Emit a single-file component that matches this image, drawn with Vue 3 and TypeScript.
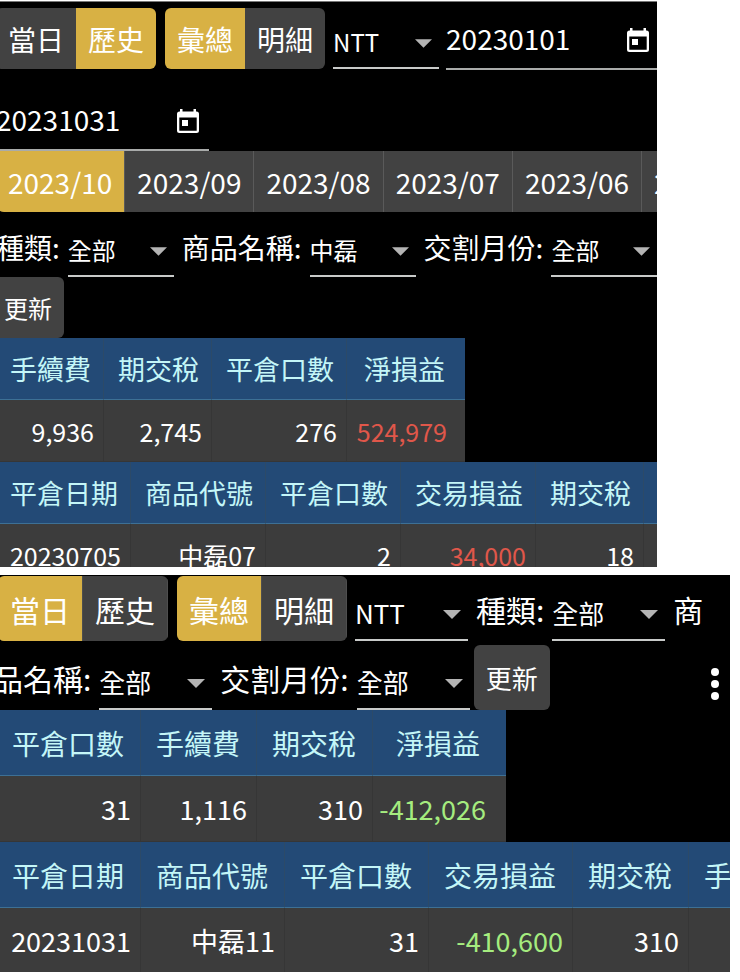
<script setup lang="ts">
import { ref } from 'vue'

interface Column {
  key: string
  label: string
}
interface Cell {
  text: string
  tone?: 'gain' | 'loss'
}

const months = ['2023/10', '2023/09', '2023/08', '2023/07', '2023/06', '2023/05']
const activeMonth = ref('2023/10')
const fromDate = ref('20230101')
const toDate = ref('20231031')
const historyRange = ref('歷史')
const historyMode = ref('彙總')
const todayRange = ref('當日')
const todayMode = ref('彙總')

const historySummary: Column[] = [
  { key: 'fee', label: '手續費' },
  { key: 'tax', label: '期交稅' },
  { key: 'lots', label: '平倉口數' },
  { key: 'net', label: '淨損益' },
]
const historySummaryRow: Cell[] = [
  { text: '9,936' },
  { text: '2,745' },
  { text: '276' },
  { text: '524,979', tone: 'gain' },
]
const detail: Column[] = [
  { key: 'date', label: '平倉日期' },
  { key: 'code', label: '商品代號' },
  { key: 'lots', label: '平倉口數' },
  { key: 'pl', label: '交易損益' },
  { key: 'tax', label: '期交稅' },
  { key: 'fee', label: '手續費' },
]
const historyRow: Cell[] = [
  { text: '20230705' },
  { text: '中磊07' },
  { text: '2' },
  { text: '34,000', tone: 'gain' },
  { text: '18' },
  { text: '' },
]
const todaySummary: Column[] = [
  { key: 'lots', label: '平倉口數' },
  { key: 'fee', label: '手續費' },
  { key: 'tax', label: '期交稅' },
  { key: 'net', label: '淨損益' },
]
const todaySummaryRow: Cell[] = [
  { text: '31' },
  { text: '1,116' },
  { text: '310' },
  { text: '-412,026', tone: 'loss' },
]
const todayRow: Cell[] = [
  { text: '20231031' },
  { text: '中磊11' },
  { text: '31' },
  { text: '-410,600', tone: 'loss' },
  { text: '310' },
  { text: '' },
]
</script>

<template>
  <main class="page">
    <section class="panel history" aria-label="歷史平倉">
      <div class="bar lead">
        <div class="group">
          <button
            v-for="name in ['當日', '歷史']"
            :key="name"
            type="button"
            :class="{ on: historyRange === name }"
            @click="historyRange = name"
          >{{ name }}</button>
        </div>
        <div class="group">
          <button
            v-for="name in ['彙總', '明細']"
            :key="name"
            type="button"
            :class="{ on: historyMode === name }"
            @click="historyMode = name"
          >{{ name }}</button>
        </div>
        <span class="pick">
          <select aria-label="幣別"><option>NTT</option></select>
          <svg viewBox="0 0 18 9" aria-hidden="true"><path d="M0 0h18L9 9z" /></svg>
        </span>
        <span class="date">
          <input v-model="fromDate" type="text" aria-label="起始日期" />
          <button type="button" aria-label="選擇起始日期">
            <svg viewBox="0 0 22 24" aria-hidden="true">
              <path fill-rule="evenodd" d="M3 0h2.500v2.500h11V0h2.500v2.500h.5A2.500 2.500 0 0 1 22 5v16.500a2.500 2.500 0 0 1-2.500 2.500h-17A2.500 2.500 0 0 1 0 21.500V5a2.500 2.500 0 0 1 2.500-2.500h.5zM2.300 8.500v13.200h17.400v-13.200z" />
              <path d="M5 11h6v6H5z" />
            </svg>
          </button>
        </span>
      </div>
      <div class="bar second">
        <span class="date">
          <input v-model="toDate" type="text" aria-label="結束日期" />
          <button type="button" aria-label="選擇結束日期">
            <svg viewBox="0 0 22 24" aria-hidden="true">
              <path fill-rule="evenodd" d="M3 0h2.500v2.500h11V0h2.500v2.500h.5A2.500 2.500 0 0 1 22 5v16.500a2.500 2.500 0 0 1-2.500 2.500h-17A2.500 2.500 0 0 1 0 21.500V5a2.500 2.500 0 0 1 2.500-2.500h.5zM2.300 8.500v13.200h17.400v-13.200z" />
              <path d="M5 11h6v6H5z" />
            </svg>
          </button>
        </span>
      </div>
      <div class="months">
        <button
          v-for="m in months"
          :key="m"
          type="button"
          :class="{ on: activeMonth === m }"
          @click="activeMonth = m"
        >{{ m }}</button>
      </div>
      <div class="bar filters">
        <label for="h-kind">種類:</label>
        <span class="pick">
          <select id="h-kind"><option>全部</option></select>
          <svg viewBox="0 0 18 9" aria-hidden="true"><path d="M0 0h18L9 9z" /></svg>
        </span>
        <label for="h-name">商品名稱:</label>
        <span class="pick">
          <select id="h-name"><option>中磊</option></select>
          <svg viewBox="0 0 18 9" aria-hidden="true"><path d="M0 0h18L9 9z" /></svg>
        </span>
        <label for="h-month">交割月份:</label>
        <span class="pick">
          <select id="h-month"><option>全部</option></select>
          <svg viewBox="0 0 18 9" aria-hidden="true"><path d="M0 0h18L9 9z" /></svg>
        </span>
      </div>
      <div class="bar">
        <button type="button" class="update">更新</button>
      </div>
      <table class="summary">
        <thead>
          <tr><th v-for="c in historySummary" :key="c.key" scope="col">{{ c.label }}</th></tr>
        </thead>
        <tbody>
          <tr><td v-for="(c, i) in historySummaryRow" :key="i" :class="c.tone">{{ c.text }}</td></tr>
        </tbody>
      </table>
      <div class="detail">
        <table>
          <thead>
            <tr><th v-for="c in detail" :key="c.key" scope="col">{{ c.label }}</th></tr>
          </thead>
          <tbody>
            <tr><td v-for="(c, i) in historyRow" :key="i" :class="c.tone">{{ c.text }}</td></tr>
          </tbody>
        </table>
      </div>
    </section>

    <section class="panel today" aria-label="當日平倉">
      <div class="bar">
        <div class="group">
          <button
            v-for="name in ['當日', '歷史']"
            :key="name"
            type="button"
            :class="{ on: todayRange === name }"
            @click="todayRange = name"
          >{{ name }}</button>
        </div>
        <div class="group">
          <button
            v-for="name in ['彙總', '明細']"
            :key="name"
            type="button"
            :class="{ on: todayMode === name }"
            @click="todayMode = name"
          >{{ name }}</button>
        </div>
        <span class="pick">
          <select aria-label="幣別"><option>NTT</option></select>
          <svg viewBox="0 0 18 9" aria-hidden="true"><path d="M0 0h18L9 9z" /></svg>
        </span>
        <label for="t-kind">種類:</label>
        <span class="pick">
          <select id="t-kind"><option>全部</option></select>
          <svg viewBox="0 0 18 9" aria-hidden="true"><path d="M0 0h18L9 9z" /></svg>
        </span>
        <label for="t-name">商</label>
      </div>
      <div class="bar second">
        <label for="t-name">品名稱:</label>
        <span class="pick">
          <select id="t-name"><option>全部</option></select>
          <svg viewBox="0 0 18 9" aria-hidden="true"><path d="M0 0h18L9 9z" /></svg>
        </span>
        <label for="t-month">交割月份:</label>
        <span class="pick">
          <select id="t-month"><option>全部</option></select>
          <svg viewBox="0 0 18 9" aria-hidden="true"><path d="M0 0h18L9 9z" /></svg>
        </span>
        <button type="button" class="update">更新</button>
        <button type="button" class="more" aria-label="更多">
          <svg viewBox="0 0 8 32" aria-hidden="true">
            <circle cx="4" cy="4" r="4" /><circle cx="4" cy="16" r="4" /><circle cx="4" cy="28" r="4" />
          </svg>
        </button>
      </div>
      <table class="summary">
        <thead>
          <tr><th v-for="c in todaySummary" :key="c.key" scope="col">{{ c.label }}</th></tr>
        </thead>
        <tbody>
          <tr><td v-for="(c, i) in todaySummaryRow" :key="i" :class="c.tone">{{ c.text }}</td></tr>
        </tbody>
      </table>
      <div class="detail">
        <table>
          <thead>
            <tr><th v-for="c in detail" :key="c.key" scope="col">{{ c.label }}</th></tr>
          </thead>
          <tbody>
            <tr><td v-for="(c, i) in todayRow" :key="i" :class="c.tone">{{ c.text }}</td></tr>
          </tbody>
        </table>
      </div>
    </section>
  </main>
</template>

<style>
body {
  background: #fff;
}
</style>

<style scoped>
.page {
  display: flex;
  flex-direction: column;
  gap: 8px;
  padding-top: 1px;
  font-family: 'Noto Sans CJK TC', 'Noto Sans', sans-serif;
  color: #fff;
}
.panel {
  background: #000;
  overflow: hidden;
}
.history {
  --text: 28px;
  --small: 24px;
  --head: 27px;
  --cell: 25px;
  --pad: 12px;
  --btn: 61px;
  --field: 106px;
  --field-h: 54px;
  --label-h: 60px;
  --row: 62px;
  --shift: -4px;
  --table-shift: -4px;
  --th-left: 14px;
  --th-right: 12px;
  --last-left: 17px;
  --last-right: 20px;
  --td-last: 18px;
  --arrow: 17px;
  margin-right: 83px;
  padding-top: 6px;
  border-top: 1px solid #777;
}
.today {
  --text: 30px;
  --small: 26px;
  --head: 28px;
  --cell: 27px;
  --pad: 12px;
  --btn: 65px;
  --field: 113px;
  --field-h: 56px;
  --label-h: 63px;
  --row: 66px;
  --shift: -2px;
  --table-shift: -3px;
  --th-left: 15px;
  --th-right: 16px;
  --last-left: 23px;
  --last-right: 26px;
  --td-last: 20px;
  --arrow: 18px;
  margin-right: 10px;
  padding-top: 1px;
}
button,
select,
input {
  margin: 0;
  padding: 0;
  border: 0;
  border-radius: 0;
  background: transparent;
  color: inherit;
  font: inherit;
}
button {
  flex: none;
  cursor: pointer;
}
.bar {
  display: flex;
  align-items: flex-end;
  gap: 8px;
  margin-left: var(--shift);
  white-space: nowrap;
}
.group {
  display: flex;
  flex: none;
  margin-right: 1px;
  border-radius: 6px;
  overflow: hidden;
}
.group + .group {
  margin-right: 0;
}
.group button {
  box-sizing: border-box;
  height: var(--btn);
  padding: 0 var(--pad);
  background: #424242;
  font-size: var(--text);
}
.group button.on,
.months button.on {
  background: #d8b144;
}
.today .group button {
  border-right: 1px solid #4e4e4e;
}
.lead .group,
.lead .pick {
  margin-bottom: 1px;
}
.lead .date {
  margin-left: -1px;
}
label {
  flex: none;
  font-size: var(--text);
  line-height: var(--label-h);
}
.pick {
  display: grid;
  flex: none;
  align-items: center;
  width: var(--field);
  height: var(--field-h);
  box-sizing: border-box;
  border-bottom: 2px solid #c8cac9;
}
.pick select,
.pick svg {
  grid-area: 1 / 1;
}
.pick select {
  appearance: none;
  width: 100%;
  height: 100%;
  font-size: var(--small);
}
.pick option {
  color: #000;
}
.pick svg {
  justify-self: end;
  width: var(--arrow);
  height: 9px;
  margin-top: 4px;
  margin-right: 7px;
  fill: #b4b4b4;
  pointer-events: none;
}
.date {
  display: flex;
  flex: none;
  align-items: center;
  box-sizing: border-box;
  width: 213px;
  height: 62px;
  padding-right: 10px;
  border-bottom: 2px solid #a9abaa;
}
.date input {
  flex: 1;
  min-width: 0;
  font-size: var(--text);
}
.date button {
  display: flex;
  padding-top: 3px;
}
.date svg {
  width: 22px;
  height: 24px;
  fill: #fff;
}
.history .second {
  margin-top: 19px;
}
.today .second {
  margin-top: 4px;
  margin-left: -7px;
}
.months {
  display: flex;
  margin-left: var(--shift);
}
.months button {
  box-sizing: border-box;
  height: var(--btn);
  padding: 0 var(--pad);
  border: solid #5a5a5a;
  border-width: 0 1px 0 0;
  background: #424242;
  font-size: var(--text);
}
.months button:first-child {
  border-radius: 0 0 0 8px;
}
.filters {
  height: 65px;
}
.update {
  height: var(--btn);
  margin-left: -4px;
  padding: 0 var(--pad);
  border-radius: 6px;
  background: #424242;
  font-size: var(--small);
}
.more {
  display: flex;
  align-items: center;
  align-self: center;
  margin-left: auto;
  padding: 14px 11px 2px;
}
.more svg {
  width: 8px;
  height: 32px;
  fill: #fff;
}
table {
  margin-left: var(--table-shift);
  border-collapse: separate;
  border-spacing: 0;
  white-space: nowrap;
}
th,
td {
  box-sizing: border-box;
  height: var(--row);
  border: solid #3a4755;
  border-width: 0 1px 1px 0;
}
th {
  padding: 0 var(--th-right) 0 var(--th-left);
  background: #234a76;
  border-right-color: #2c4a68;
  border-bottom-color: #3d7095;
  color: #c4f6f8;
  font-size: var(--head);
  font-weight: 400;
}
td {
  padding: 0 9px 0 4px;
  background: #3c3c3c;
  border-color: #363636;
  font-size: var(--cell);
  text-align: right;
}
.summary th:last-child {
  padding-right: var(--last-right);
  padding-left: var(--last-left);
  border-right: 0;
}
.summary td:last-child {
  padding-right: var(--td-last);
  border-right: 0;
}
.history .detail {
  max-height: 105px;
  overflow: hidden;
}
.today .detail {
  max-height: 130px;
  overflow: hidden;
}
.gain {
  color: #e0574a;
}
.loss {
  color: #a5ec7f;
}
</style>
